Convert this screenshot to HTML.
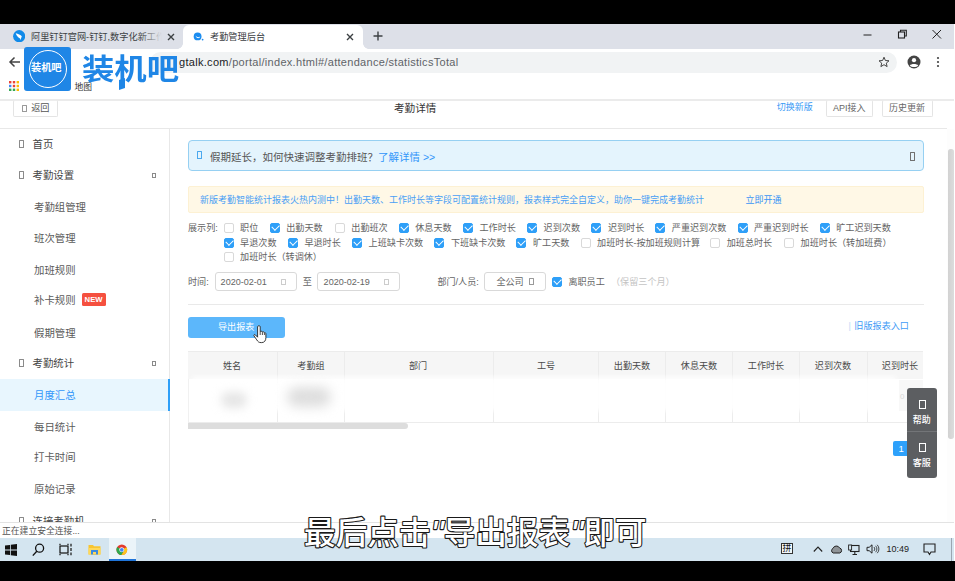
<!DOCTYPE html>
<html lang="zh-CN">
<head>
<meta charset="utf-8">
<title>考勤管理后台</title>
<style>
*{box-sizing:border-box;margin:0;padding:0}
html,body{width:955px;height:581px;overflow:hidden;background:#fff}
body{position:relative;font-family:"Liberation Sans","Noto Sans CJK SC",sans-serif;color:#333;font-size:9.1px;line-height:1}
.abs{position:absolute}
.t{position:absolute;white-space:nowrap;line-height:1}
#topblack{left:0;top:0;width:955px;height:24px;background:#000}
#botblack{left:0;top:561px;width:955px;height:20px;background:#000}
/* chrome */
#tabstrip{left:0;top:24px;width:955px;height:25px;background:#dde0e8}
#tab2{left:183px;top:25px;width:180px;height:24px;background:#fff;border-radius:6px 6px 0 0}
#toolbar{left:0;top:49px;width:955px;height:50px;background:#fff}
#omni{left:150px;top:52px;width:747px;height:21px;background:#f1f3f4;border-radius:11px}
#hline1{left:0;top:99px;width:955px;height:1.6px;background:#ebebeb}
#hline2{left:0;top:128px;width:947px;height:1px;background:#e8e8e8}
/* sidebar */
#sideborder{left:169px;top:129px;width:1px;height:394px;background:#e8e8e8}
.mi{position:absolute;left:32.6px;font-size:10.4px;color:#444;white-space:nowrap;line-height:12px}
.mi.sub{left:34px;color:#5a5a5a}
.ico{position:absolute;left:18.8px;width:5.4px;height:8.4px;border:1px solid #8a8a8a;border-radius:0.5px;margin-top:-1px}
.arr{position:absolute;left:152.2px;width:4px;height:5px;border:1px solid #8a8a8a;margin-top:-1.4px}
#active{left:0;top:379px;width:170px;height:31.5px;background:#e8f6fe;border-right:2.5px solid #2e9ff8}
/* content */
.cb{position:absolute;width:10px;height:10px;border:1px solid #d9d9d9;border-radius:2px;background:#fff}
.cb.on{background:#2e9ff8;border-color:#2e9ff8}
.cb.on::after{content:"";position:absolute;left:0;top:0;width:3.9px;height:5.8px;border:solid #fff;border-width:0 1.6px 1.6px 0;transform:translate(2.2px,-0.9px) rotate(45deg)}
.lb{position:absolute;white-space:nowrap;font-size:9.1px;line-height:11px;color:#646464;margin-top:0.5px}
.inp{position:absolute;height:20px;border:1px solid #d9d9d9;border-radius:3px;background:#fff}
.th{position:absolute;top:360px;font-size:9.1px;line-height:12px;color:#4a4a4a;white-space:nowrap;transform:translateX(-50%)}
.vl{position:absolute;width:1px;background:#ececec}
</style>
</head>
<body>
<div id="topblack" class="abs"></div>

<!-- ===== browser chrome ===== -->
<div id="tabstrip" class="abs"></div>
<div id="tab2" class="abs"></div>
<div id="toolbar" class="abs"></div>
<div id="omni" class="abs"></div>

<!-- tab 1 -->
<svg class="abs" style="left:12.9px;top:29.9px" width="12.4" height="12.4" viewBox="0 0 12.4 12.4"><circle cx="6.2" cy="6.2" r="6.1" fill="#118ae9"/><path d="M2.7 3.2 C5 3.6 7.6 4.8 9 6.5 L8.2 7.1 L8.5 7.6 L7.2 10.2 L7.1 8.6 C5.4 7.8 3.4 5.8 2.7 3.2 Z" fill="#fff"/></svg>
<div class="t" style="left:31px;top:31px;font-size:9.2px;line-height:12px;color:#3c4043;width:131px;overflow:hidden">阿里钉钉官网-钉钉,数字化新工作</div>
<div class="abs" style="left:140px;top:26px;width:22px;height:20px;background:linear-gradient(90deg,rgba(221,224,232,0),#dde0e8)"></div>
<svg class="abs" style="left:167px;top:32.5px" width="8" height="8" viewBox="0 0 8 8"><path d="M1 1 L7 7 M7 1 L1 7" stroke="#3c4043" stroke-width="1.4" fill="none"/></svg>
<!-- tab 2 -->
<div class="abs" style="left:177px;top:43px;width:6px;height:6px;background:radial-gradient(circle at 0 0,rgba(255,255,255,0) 5.6px,#fff 6.2px)"></div>
<div class="abs" style="left:363px;top:43px;width:6px;height:6px;background:radial-gradient(circle at 100% 0,rgba(255,255,255,0) 5.6px,#fff 6.2px)"></div>
<svg class="abs" style="left:193px;top:31.5px" width="11" height="9" viewBox="0 0 11 9"><circle cx="4.6" cy="4.4" r="3.9" fill="#1a8cf0"/><path d="M2.6 3.6 C3.6 5.4 5.6 5.8 7.2 4.6 C6.6 6.8 3.2 6.8 2.6 3.6Z" fill="#fff"/><circle cx="9.6" cy="7.6" r="0.9" fill="#1a8cf0"/></svg>
<div class="t" style="left:210px;top:31px;font-size:9.2px;line-height:12px;color:#3c4043">考勤管理后台</div>
<svg class="abs" style="left:346px;top:32.5px" width="8" height="8" viewBox="0 0 8 8"><path d="M1 1 L7 7 M7 1 L1 7" stroke="#3c4043" stroke-width="1.4" fill="none"/></svg>
<svg class="abs" style="left:373px;top:31px" width="10" height="10" viewBox="0 0 10 10"><path d="M5 0.5 V9.5 M0.5 5 H9.5" stroke="#3c4043" stroke-width="1.4" fill="none"/></svg>
<!-- window buttons -->
<svg class="abs" style="left:862px;top:30px" width="12" height="10" viewBox="0 0 12 10"><path d="M1.5 5 H9.5" stroke="#222" stroke-width="1"/></svg>
<svg class="abs" style="left:897px;top:29px" width="12" height="11" viewBox="0 0 12 11"><rect x="1.5" y="3" width="6" height="6" fill="none" stroke="#222" stroke-width="1.1"/><path d="M3.5 3 V1.3 H9.3 V7 H7.5" fill="none" stroke="#222" stroke-width="1.1"/></svg>
<svg class="abs" style="left:931px;top:29px" width="12" height="11" viewBox="0 0 12 11"><path d="M1.5 1 L10 9.5 M10 1 L1.5 9.5" stroke="#222" stroke-width="1" fill="none"/></svg>

<!-- toolbar -->
<svg class="abs" style="left:8px;top:56px" width="13" height="12" viewBox="0 0 13 12"><path d="M12 6 H2 M6.5 1.5 L2 6 L6.5 10.5" stroke="#444" stroke-width="1.5" fill="none"/></svg>
<div class="t" id="url" style="left:179px;top:56px;font-size:11px;line-height:13px;letter-spacing:0.3px;color:#5f6368"><span style="color:#202124">gtalk.com</span>/portal/index.html#/attendance/statisticsTotal</div>
<svg class="abs" style="left:878px;top:56px" width="12" height="12" viewBox="0 0 12 12"><path d="M6 1.2 L7.4 4.5 L11 4.8 L8.3 7.1 L9.1 10.6 L6 8.7 L2.9 10.6 L3.7 7.1 L1 4.8 L4.6 4.5 Z" fill="none" stroke="#444" stroke-width="1"/></svg>
<svg class="abs" style="left:907px;top:55px" width="14" height="14" viewBox="0 0 14 14"><circle cx="7" cy="7" r="6.5" fill="#444"/><circle cx="7" cy="5.2" r="2.1" fill="#fff"/><path d="M2.8 10.6 C4 8.6 10 8.6 11.2 10.6 C9.5 12.6 4.5 12.6 2.8 10.6Z" fill="#fff"/></svg>
<svg class="abs" style="left:936px;top:56px" width="4" height="12" viewBox="0 0 4 12"><circle cx="2" cy="2" r="1.1" fill="#444"/><circle cx="2" cy="6" r="1.1" fill="#444"/><circle cx="2" cy="10" r="1.1" fill="#444"/></svg>

<!-- bookmarks -->
<svg class="abs" style="left:8px;top:80px" width="12" height="12" viewBox="0 0 12 12">
<rect x="1" y="1" width="2.4" height="2.4" fill="#ea4335"/><rect x="4.8" y="1" width="2.4" height="2.4" fill="#ea4335"/><rect x="8.6" y="1" width="2.4" height="2.4" fill="#fbbc05"/>
<rect x="1" y="4.8" width="2.4" height="2.4" fill="#4285f4"/><rect x="4.8" y="4.8" width="2.4" height="2.4" fill="#ea4335"/><rect x="8.6" y="4.8" width="2.4" height="2.4" fill="#fbbc05"/>
<rect x="1" y="8.6" width="2.4" height="2.4" fill="#34a853"/><rect x="4.8" y="8.6" width="2.4" height="2.4" fill="#34a853"/><rect x="8.6" y="8.6" width="2.4" height="2.4" fill="#fbbc05"/>
</svg>
<div class="t" style="left:74.4px;top:82px;font-size:8.8px;line-height:11px;color:#333">地图</div>

<!-- watermark logo -->
<div class="abs" style="left:24px;top:47px;width:47px;height:44px;background:#1f86e6;border-radius:3px"></div>
<div class="abs" style="left:29px;top:50px;width:38px;height:38px;border:1px solid #fff;border-radius:50%"></div>
<div class="t" style="left:31px;top:61px;font-size:10.2px;line-height:14px;font-weight:700;color:#fff;letter-spacing:0px">装机吧</div>
<div class="t" id="biglogo" style="left:81.6px;top:49.6px;font-size:29px;line-height:40px;font-weight:700;color:#1f86e6;letter-spacing:0px;transform-origin:0 0;transform:scale(1.115,1)">装机吧</div>
<div class="abs" style="left:118.6px;top:79px;width:6px;height:10px;background:#1f86e6;transform:skewY(-20deg)"></div>

<div id="hline1" class="abs"></div>

<!-- ===== page header ===== -->
<div class="abs" style="left:13px;top:100px;width:44.6px;height:16.6px;border:1px solid #e4e4e4;border-top-color:#ededed;border-radius:2px"></div>
<div class="ico" style="left:22.2px;top:105.6px;width:5px;height:7.4px;border-color:#999"></div>
<div class="t" style="left:31.2px;top:103.4px;font-size:9.2px;line-height:11px;color:#555">返回</div>
<div class="t" style="left:394px;top:101.6px;font-size:10.6px;line-height:13px;color:#333">考勤详情</div>
<div class="t" style="left:776.8px;top:102.4px;font-size:9px;line-height:11px;color:#3a9af5">切换新版</div>
<div class="abs" style="left:826px;top:100px;width:47.4px;height:16.6px;border:1px solid #e4e4e4;border-top-color:#ededed;border-radius:2px"></div>
<div class="t" style="left:833px;top:103.2px;font-size:9px;line-height:11px;color:#666">API接入</div>
<div class="abs" style="left:881.6px;top:100px;width:51.4px;height:16.6px;border:1px solid #e4e4e4;border-top-color:#ededed;border-radius:2px"></div>
<div class="t" style="left:889px;top:103.2px;font-size:9px;line-height:11px;color:#666">历史更新</div>
<div id="hline2" class="abs"></div>

<!-- ===== sidebar ===== -->
<div id="sideborder" class="abs"></div>
<div id="active" class="abs"></div>
<div class="ico" style="top:141px"></div><div class="mi" style="top:139px">首页</div>
<div class="ico" style="top:172px"></div><div class="mi" style="top:170px">考勤设置</div><div class="arr" style="top:174px"></div>
<div class="mi sub" style="top:202.1px">考勤组管理</div>
<div class="mi sub" style="top:233.4px">班次管理</div>
<div class="mi sub" style="top:264.5px">加班规则</div>
<div class="mi sub" style="top:295px">补卡规则</div>
<div class="abs" style="left:81.8px;top:293.3px;width:24.2px;height:12.3px;background:#f5503f;border-radius:1.5px"></div>
<div class="t" style="left:84.6px;top:296px;font-size:7.7px;line-height:8px;color:#fff;font-weight:700">NEW</div>
<div class="mi sub" style="top:327.5px">假期管理</div>
<div class="ico" style="top:360px"></div><div class="mi" style="top:358px">考勤统计</div><div class="arr" style="top:362px"></div>
<div class="mi sub" style="top:389.6px;color:#3296fa">月度汇总</div>
<div class="mi sub" style="top:421.6px">每日统计</div>
<div class="mi sub" style="top:452.4px">打卡时间</div>
<div class="mi sub" style="top:483.6px">原始记录</div>
<div class="ico" style="top:518px"></div><div class="mi" style="top:516px">连接考勤机</div><div class="arr" style="top:520px"></div>

<!-- ===== main content ===== -->
<!-- blue alert -->
<div class="abs" style="left:188px;top:140px;width:736px;height:31px;background:#e4f4fd;border:1.5px solid #96d0f2;border-radius:4px"></div>
<div class="ico" style="left:197px;top:152px;border-color:#4aa8ee"></div>
<div class="t" style="left:210px;top:150.5px;font-size:10.5px;line-height:13px;color:#555">假期延长，如何快速调整考勤排班？<span style="color:#3296fa">了解详情 &gt;&gt;</span></div>
<div class="ico" style="left:909.6px;top:153px;border-color:#707070;width:5.6px;height:8.6px"></div>
<!-- yellow notice -->
<div class="abs" style="left:188px;top:186px;width:736px;height:27px;background:#fff8e6;border:1px solid #fdf1d3;border-radius:2px"></div>
<div class="t" style="left:200px;top:194.6px;font-size:9px;line-height:11px;color:#4a9ff5">新版考勤智能统计报表火热内测中！出勤天数、工作时长等字段可配置统计规则，报表样式完全自定义，助你一键完成考勤统计</div>
<div class="t" style="left:745.4px;top:194.6px;font-size:9px;line-height:11px;color:#3a95f5">立即开通</div>

<!-- checkbox rows -->
<div class="lb" style="left:188px;top:222.3px">展示列:</div>
<div class="cb" style="left:224px;top:223px"></div><div class="lb" style="left:240.1px;top:222.3px">职位</div>
<div class="cb on" style="left:270px;top:223px"></div><div class="lb" style="left:286.2px;top:222.3px">出勤天数</div>
<div class="cb" style="left:335px;top:223px"></div><div class="lb" style="left:351.3px;top:222.3px">出勤班次</div>
<div class="cb on" style="left:399px;top:223px"></div><div class="lb" style="left:415.2px;top:222.3px">休息天数</div>
<div class="cb on" style="left:463px;top:223px"></div><div class="lb" style="left:479.5px;top:222.3px">工作时长</div>
<div class="cb on" style="left:527px;top:223px"></div><div class="lb" style="left:543.6px;top:222.3px">迟到次数</div>
<div class="cb on" style="left:591px;top:223px"></div><div class="lb" style="left:607.9px;top:222.3px">迟到时长</div>
<div class="cb on" style="left:655px;top:223px"></div><div class="lb" style="left:671.8px;top:222.3px">严重迟到次数</div>
<div class="cb on" style="left:738px;top:223px"></div><div class="lb" style="left:754.0px;top:222.3px">严重迟到时长</div>
<div class="cb on" style="left:820px;top:223px"></div><div class="lb" style="left:836.2px;top:222.3px">旷工迟到天数</div>
<div class="cb on" style="left:224px;top:238px"></div><div class="lb" style="left:240.1px;top:237.0px">早退次数</div>
<div class="cb on" style="left:288px;top:238px"></div><div class="lb" style="left:304.4px;top:237.0px">早退时长</div>
<div class="cb on" style="left:352px;top:238px"></div><div class="lb" style="left:368.6px;top:237.0px">上班缺卡次数</div>
<div class="cb on" style="left:434px;top:238px"></div><div class="lb" style="left:450.9px;top:237.0px">下班缺卡次数</div>
<div class="cb on" style="left:516px;top:238px"></div><div class="lb" style="left:533.0px;top:237.0px">旷工天数</div>
<div class="cb" style="left:581px;top:238px"></div><div class="lb" style="left:597.1px;top:237.0px">加班时长-按加班规则计算</div>
<div class="cb" style="left:710px;top:238px"></div><div class="lb" style="left:726.7px;top:237.0px">加班总时长</div>
<div class="cb" style="left:784px;top:238px"></div><div class="lb" style="left:800.6px;top:237.0px">加班时长（转加班费）</div>
<div class="cb" style="left:224px;top:252px"></div><div class="lb" style="left:240.1px;top:251.7px">加班时长（转调休）</div>

<!-- date row -->
<div class="lb" style="left:188px;top:276px">时间:</div>
<div class="inp" style="left:214.6px;top:271.6px;width:82px;height:19.8px"></div>
<div class="lb" style="left:220.6px;top:276.2px;font-size:9.05px">2020-02-01</div>
<div class="ico" style="left:281px;top:279.6px;border-color:#ccc;width:5.4px;height:6px"></div>
<div class="lb" style="left:302.8px;top:276px">至</div>
<div class="inp" style="left:317.4px;top:271.6px;width:82.3px;height:19.8px"></div>
<div class="lb" style="left:323.6px;top:276.2px;font-size:9.05px">2020-02-19</div>
<div class="ico" style="left:384px;top:279.6px;border-color:#ccc;width:5.4px;height:6px"></div>
<div class="lb" style="left:437.4px;top:276px">部门/人员:</div>
<div class="inp" style="left:484.4px;top:271.6px;width:61.6px;height:19.8px"></div>
<div class="lb" style="left:496.4px;top:276px">全公司</div>
<div class="ico" style="left:529.4px;top:279px;border-color:#999;width:4.6px;height:7px"></div>
<div class="cb on" style="left:552px;top:277px"></div><div class="lb" style="left:568.4px;top:276px">离职员工</div>
<div class="lb" style="left:611px;top:276px;color:#c4c4c4">（保留三个月）</div>

<div class="abs" style="left:188px;top:304px;width:736px;height:1px;background:#e9e9e9"></div>

<!-- export button -->
<div class="abs" style="left:188px;top:317px;width:97px;height:20.6px;background:#5cb7fb;border-radius:3px"></div>
<div class="t" style="left:218px;top:320.7px;font-size:9.1px;line-height:12px;color:#fff">导出报表</div>
<div class="t" style="left:848.6px;top:321px;font-size:9.1px;line-height:11px;color:#3f9cf6"><span style="color:#bcd9f5;margin-right:3.4px">|</span>旧版报表入口</div>

<!-- table -->
<div class="abs" style="left:188px;top:351px;width:735px;height:28px;background:#f6f6f6;border-top:1px solid #ececec"></div>
<div class="abs" style="left:188px;top:379px;width:735px;height:44px;border-bottom:1px solid #ececec;border-left:1px solid #f0f0f0"></div>
<div class="vl" style="left:277px;top:352px;height:71px"></div>
<div class="vl" style="left:344px;top:352px;height:71px"></div>
<div class="vl" style="left:493px;top:352px;height:71px"></div>
<div class="vl" style="left:598px;top:352px;height:71px"></div>
<div class="vl" style="left:665px;top:352px;height:71px"></div>
<div class="vl" style="left:732px;top:352px;height:71px"></div>
<div class="vl" style="left:799px;top:352px;height:71px"></div>
<div class="vl" style="left:867px;top:352px;height:71px"></div>
<div class="th" style="left:232px">姓名</div>
<div class="th" style="left:311px">考勤组</div>
<div class="th" style="left:418px">部门</div>
<div class="th" style="left:546px">工号</div>
<div class="th" style="left:632px">出勤天数</div>
<div class="th" style="left:699px">休息天数</div>
<div class="th" style="left:766px">工作时长</div>
<div class="th" style="left:833px">迟到次数</div>
<div class="th" style="left:900px">迟到时长</div>
<!-- blurred cells -->
<div class="abs" style="left:192px;top:377px;width:704px;height:34px;background:#fff;opacity:.95;filter:blur(2.5px)"></div>
<div class="abs" style="left:221px;top:392px;width:26px;height:16px;background:#e6e6e6;border-radius:8px;filter:blur(5px)"></div>
<div class="abs" style="left:287px;top:387px;width:44px;height:20px;background:#dedede;border-radius:10px;filter:blur(6px)"></div>
<div class="abs" style="left:899px;top:380px;width:24px;height:31px;background:#f8f8f8"></div>
<div class="t" style="left:900px;top:392px;font-size:8px;line-height:9px;color:#d8d8d8">0</div>
<!-- h scrollbar -->
<div class="abs" style="left:188px;top:423px;width:220px;height:5.5px;background:#dddddd;border-radius:0 3px 3px 0"></div>

<!-- pagination -->
<div class="abs" style="left:893.4px;top:441.4px;width:14px;height:14.4px;background:#2ea1fb;border-radius:2px 0 0 2px"></div>
<div class="t" style="left:898.6px;top:443.6px;font-size:9.6px;line-height:10px;color:#fff;font-weight:500">1</div>

<!-- help float -->
<div class="abs" style="left:907px;top:388px;width:30px;height:90px;background:#5c5e61;border-radius:3px"></div>
<div class="abs" style="left:907px;top:431px;width:30px;height:1px;background:#737578"></div>
<div class="ico" style="left:918.8px;top:401px;width:6.8px;height:8.8px;border-color:#fff;border-radius:0"></div>
<div class="t" style="left:912.8px;top:415px;font-size:9px;line-height:11px;color:#fff;font-weight:500">帮助</div>
<div class="ico" style="left:918.8px;top:444px;width:6.8px;height:8.8px;border-color:#fff;border-radius:0"></div>
<div class="t" style="left:912.8px;top:458px;font-size:9px;line-height:11px;color:#fff;font-weight:500">客服</div>

<!-- page scrollbar -->
<div class="abs" style="left:947px;top:129px;width:8px;height:394px;background:#fdfdfd"></div>
<div class="abs" style="left:948.3px;top:149.4px;width:5.4px;height:289.4px;background:linear-gradient(90deg,#d2d2d2,#dcdcdc);border-radius:2.7px"></div>

<!-- status bubble -->
<div class="abs" style="left:0;top:522px;width:955px;height:16px;background:#fff;border-top:1px solid #e3e3e3"></div>
<div class="t" style="left:2px;top:526px;font-size:8.8px;line-height:10px;color:#555">正在建立安全连接...</div>

<!-- taskbar -->
<div class="abs" style="left:0;top:538px;width:955px;height:23px;background:#d4e5f0"></div>
<div class="abs" style="left:109px;top:538px;width:27px;height:23px;background:#ebf4f9;border-bottom:2px solid #1f74d8"></div>
<svg class="abs" style="left:5px;top:544px" width="12" height="12" viewBox="0 0 12 12"><path d="M0 1.6 L5 0.9 V5.6 H0Z M5.8 0.8 L12 0 V5.6 H5.8Z M0 6.4 H5 V11.1 L0 10.4Z M5.8 6.4 H12 V12 L5.8 11.2Z" fill="#111"/></svg>
<svg class="abs" style="left:32px;top:543px" width="13" height="14" viewBox="0 0 13 14"><circle cx="7.6" cy="5.2" r="4" fill="none" stroke="#111" stroke-width="1.3"/><path d="M4.8 8.2 L0.8 12.6" stroke="#111" stroke-width="1.4"/></svg>
<svg class="abs" style="left:59px;top:543px" width="14" height="13" viewBox="0 0 14 13"><rect x="1" y="3" width="8" height="7" fill="none" stroke="#111" stroke-width="1.2"/><path d="M1 0.8 V2 M9 0.8 V2 M1 11 V12.2 M9 11 V12.2 M12 0.8 V3.4 M12 5 V8 M12 9.6 V12.2" stroke="#111" stroke-width="1.2"/></svg>
<svg class="abs" style="left:88px;top:543px" width="13" height="13" viewBox="0 0 13 13"><path d="M0.5 2 H5 L6 3.2 H12.5 V11.5 H0.5Z" fill="#f8c531"/><path d="M0.5 5 H12.5 V11.5 H0.5Z" fill="#ffd85a"/><rect x="3" y="7" width="7" height="4.5" fill="#3a8be0"/><rect x="5" y="9" width="3" height="2.5" fill="#ffd85a"/></svg>
<svg class="abs" style="left:116px;top:543.5px" width="11.6" height="11.6" viewBox="0 0 13 13"><circle cx="6.5" cy="6.5" r="6" fill="#e33b2e"/><path d="M6.5 6.5 L1.3 3.5 A6 6 0 0 0 6 12.5 L9 7.5Z" fill="#2da94f"/><path d="M6.5 6.5 L11.8 3.6 A6 6 0 0 1 6 12.5 L9 7.5Z" fill="#fcc31e"/><circle cx="6.5" cy="6.5" r="2.8" fill="#fff"/><circle cx="6.5" cy="6.5" r="2.1" fill="#4285f4"/></svg>
<!-- tray -->
<div class="abs" style="left:781px;top:542.6px;width:12px;height:11.4px;border:1px solid #333;background:#f2f7fa"></div>
<div class="t" style="left:782.6px;top:543.8px;font-size:8.8px;line-height:9px;color:#111">拼</div>
<svg class="abs" style="left:813px;top:545px" width="10" height="8" viewBox="0 0 10 8"><path d="M0.8 6.5 L5 2 L9.2 6.5" fill="none" stroke="#222" stroke-width="1.1"/></svg>
<svg class="abs" style="left:829.5px;top:544.5px" width="13" height="9" viewBox="0 0 13 9"><path d="M3.2 8 A2.5 2.5 0 0 1 3 3.4 A3.6 3.6 0 0 1 9.6 3 A2.6 2.6 0 0 1 9.8 8Z" fill="#8f9498" stroke="#222" stroke-width="1"/></svg>
<svg class="abs" style="left:848px;top:543.5px" width="13" height="12" viewBox="0 0 13 12"><rect x="2.5" y="1.5" width="8.5" height="6" fill="none" stroke="#222" stroke-width="1.1"/><path d="M4.5 10.5 H9 M6.8 7.5 V10.5" stroke="#222" stroke-width="1.1"/><rect x="0.6" y="1" width="3" height="5" fill="#d4e5f0" stroke="#222" stroke-width="0.9"/></svg>
<svg class="abs" style="left:866px;top:543px" width="14" height="12" viewBox="0 0 14 12"><path d="M1 4.3 H3.2 L6 1.8 V10.2 L3.2 7.7 H1Z" fill="none" stroke="#222" stroke-width="1"/><path d="M8 4 A3 3 0 0 1 8 8 M9.6 2.8 A4.6 4.6 0 0 1 9.6 9.2 M11.2 1.8 A6 6 0 0 1 11.2 10.2" fill="none" stroke="#222" stroke-width="0.8"/></svg>
<div class="t" style="left:886.6px;top:544px;font-size:9px;line-height:10px;color:#222">10:49</div>
<svg class="abs" style="left:922.6px;top:543px" width="13" height="13" viewBox="0 0 13 13"><path d="M1 1 H12 V9 H8 L6.5 11.5 L5 9 H1Z" fill="none" stroke="#222" stroke-width="1.1"/></svg>
<div class="abs" style="left:951px;top:538px;width:1px;height:23px;background:#9aa6b0"></div>
<div class="abs" style="left:954px;top:24px;width:1px;height:537px;background:#fff"></div>

<!-- cursor -->
<svg class="abs" style="left:253px;top:325px" width="14" height="19" viewBox="0 0 14 19"><path d="M4.6 1.6 C4.6 0.5 7.2 0.5 7.2 1.6 V6.6 C7.8 6 9.2 6.1 9.4 7 C10 6.6 11.2 6.8 11.4 7.7 C12 7.4 12.9 7.8 12.9 8.7 V12.6 C12.9 15.6 11.4 17.6 8.6 17.6 H8 C5.8 17.6 4.8 16.5 3.8 14.9 L1 10.9 C0.4 9.9 1.6 9 2.4 9.9 L4.6 12.2 Z" fill="#fff" stroke="#222" stroke-width="0.9" stroke-linejoin="round"/><path d="M7.2 6.6 V10 M9.4 7.2 V10 M11.4 8 V10" stroke="#222" stroke-width="0.8" fill="none"/></svg>

<!-- subtitle -->
<svg class="abs" style="left:290px;top:508px;overflow:visible" width="380" height="46"><text x="14.1" y="36" text-anchor="start" letter-spacing="0.1" font-family="'Liberation Sans','Noto Sans CJK SC',sans-serif" font-size="31.5" font-weight="500" fill="#fff" stroke="#1a1a1a" stroke-width="2.2" stroke-linejoin="round" paint-order="stroke fill">最后点击<tspan font-size="37" font-style="italic" dy="2.5">"</tspan><tspan dy="-2.5">导出报表</tspan><tspan font-size="37" font-style="italic" dy="2.5">"</tspan><tspan dy="-2.5">即可</tspan></text></svg>

<div id="botblack" class="abs"></div>
</body>
</html>
